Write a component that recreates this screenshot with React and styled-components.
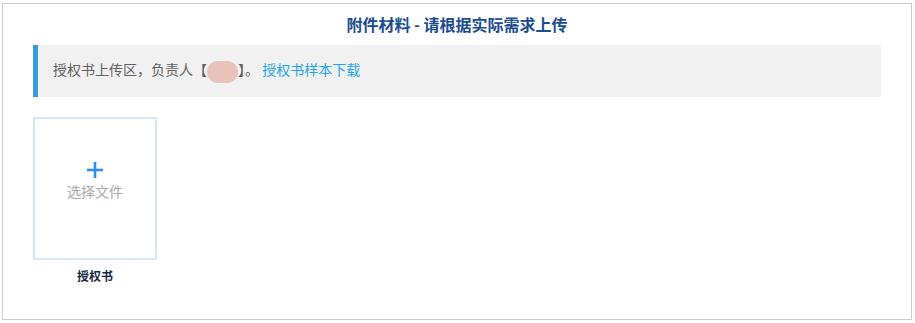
import React from 'react';
import styled, { createGlobalStyle } from 'styled-components';

const Colors = {
  frame: '#cccccc',
  title: '#1a4c8e',
  note: '#f1f1f1',
  noteBar: '#3a9ad9',
  text: '#606060',
  link: '#1ea5ee',
  boxBorder: '#d3e8fb',
  plus: '#2d8cf0',
  hint: '#aaaaaa',
  label: '#1b2747',
};

const Global = createGlobalStyle`
  body {
    margin: 0;
    background: #fff;
    font-family: "Noto Sans CJK SC", "Noto Sans", sans-serif;
  }
`;

const Page = styled.div`
  padding: 3px 2px;
`;

const Frame = styled.div`
  box-sizing: border-box;
  width: 910px;
  height: 317px;
  border: 1px solid ${Colors.frame};
  padding: 10px 30px 0;
`;

const Title = styled.div`
  font-size: 16px;
  line-height: 20px;
  font-weight: bold;
  text-align: center;
  color: ${Colors.title};
`;

const Notice = styled.div`
  margin-top: 11px;
  height: 52px;
  box-sizing: border-box;
  background: ${Colors.note};
  border-left: 5px solid ${Colors.noteBar};
  padding-left: 15px;
  display: flex;
  align-items: center;
  font-size: 14px;
  color: ${Colors.text};
`;

const Masked = styled.span`
  display: inline-block;
  width: 31px;
  height: 22px;
  border-radius: 11px;
  background: #e9c3b9;
  vertical-align: middle;
`;

const Link = styled.a`
  color: ${Colors.link};
  text-decoration: none;
  cursor: pointer;
`;

const Uploads = styled.div`
  margin-top: 20px;
  display: flex;
  gap: 20px;
`;

const Item = styled.div`
  width: 124px;
  display: flex;
  flex-direction: column;
  align-items: center;
`;

const Box = styled.div`
  box-sizing: border-box;
  width: 124px;
  height: 143px;
  border: 2px solid ${Colors.boxBorder};
  display: flex;
  flex-direction: column;
  align-items: center;
  justify-content: center;
  padding-bottom: 16px;
  cursor: pointer;
`;

const Hint = styled.div`
  margin-top: 2px;
  font-size: 14px;
  color: ${Colors.hint};
`;

const Label = styled.div`
  margin-top: 7px;
  font-size: 12px;
  font-weight: bold;
  color: ${Colors.label};
`;

const Plus = () => (
  <svg width="18" height="18" viewBox="0 0 18 18">
    <path d="M9 1v16M1 9h16" stroke={Colors.plus} strokeWidth="2.6" fill="none" />
  </svg>
);

const UploadItem = ({ label }) => (
  <Item>
    <Box>
      <Plus />
      <Hint>选择文件</Hint>
    </Box>
    <Label>{label}</Label>
  </Item>
);

export default function App() {
  return (
    <Page>
      <Global />
      <Frame>
        <Title>附件材料 - 请根据实际需求上传</Title>
        <Notice>
          <span>
            授权书上传区，负责人【<Masked />】。 <Link>授权书样本下载</Link>
          </span>
        </Notice>
        <Uploads>
          <UploadItem label="授权书" />
        </Uploads>
      </Frame>
    </Page>
  );
}
